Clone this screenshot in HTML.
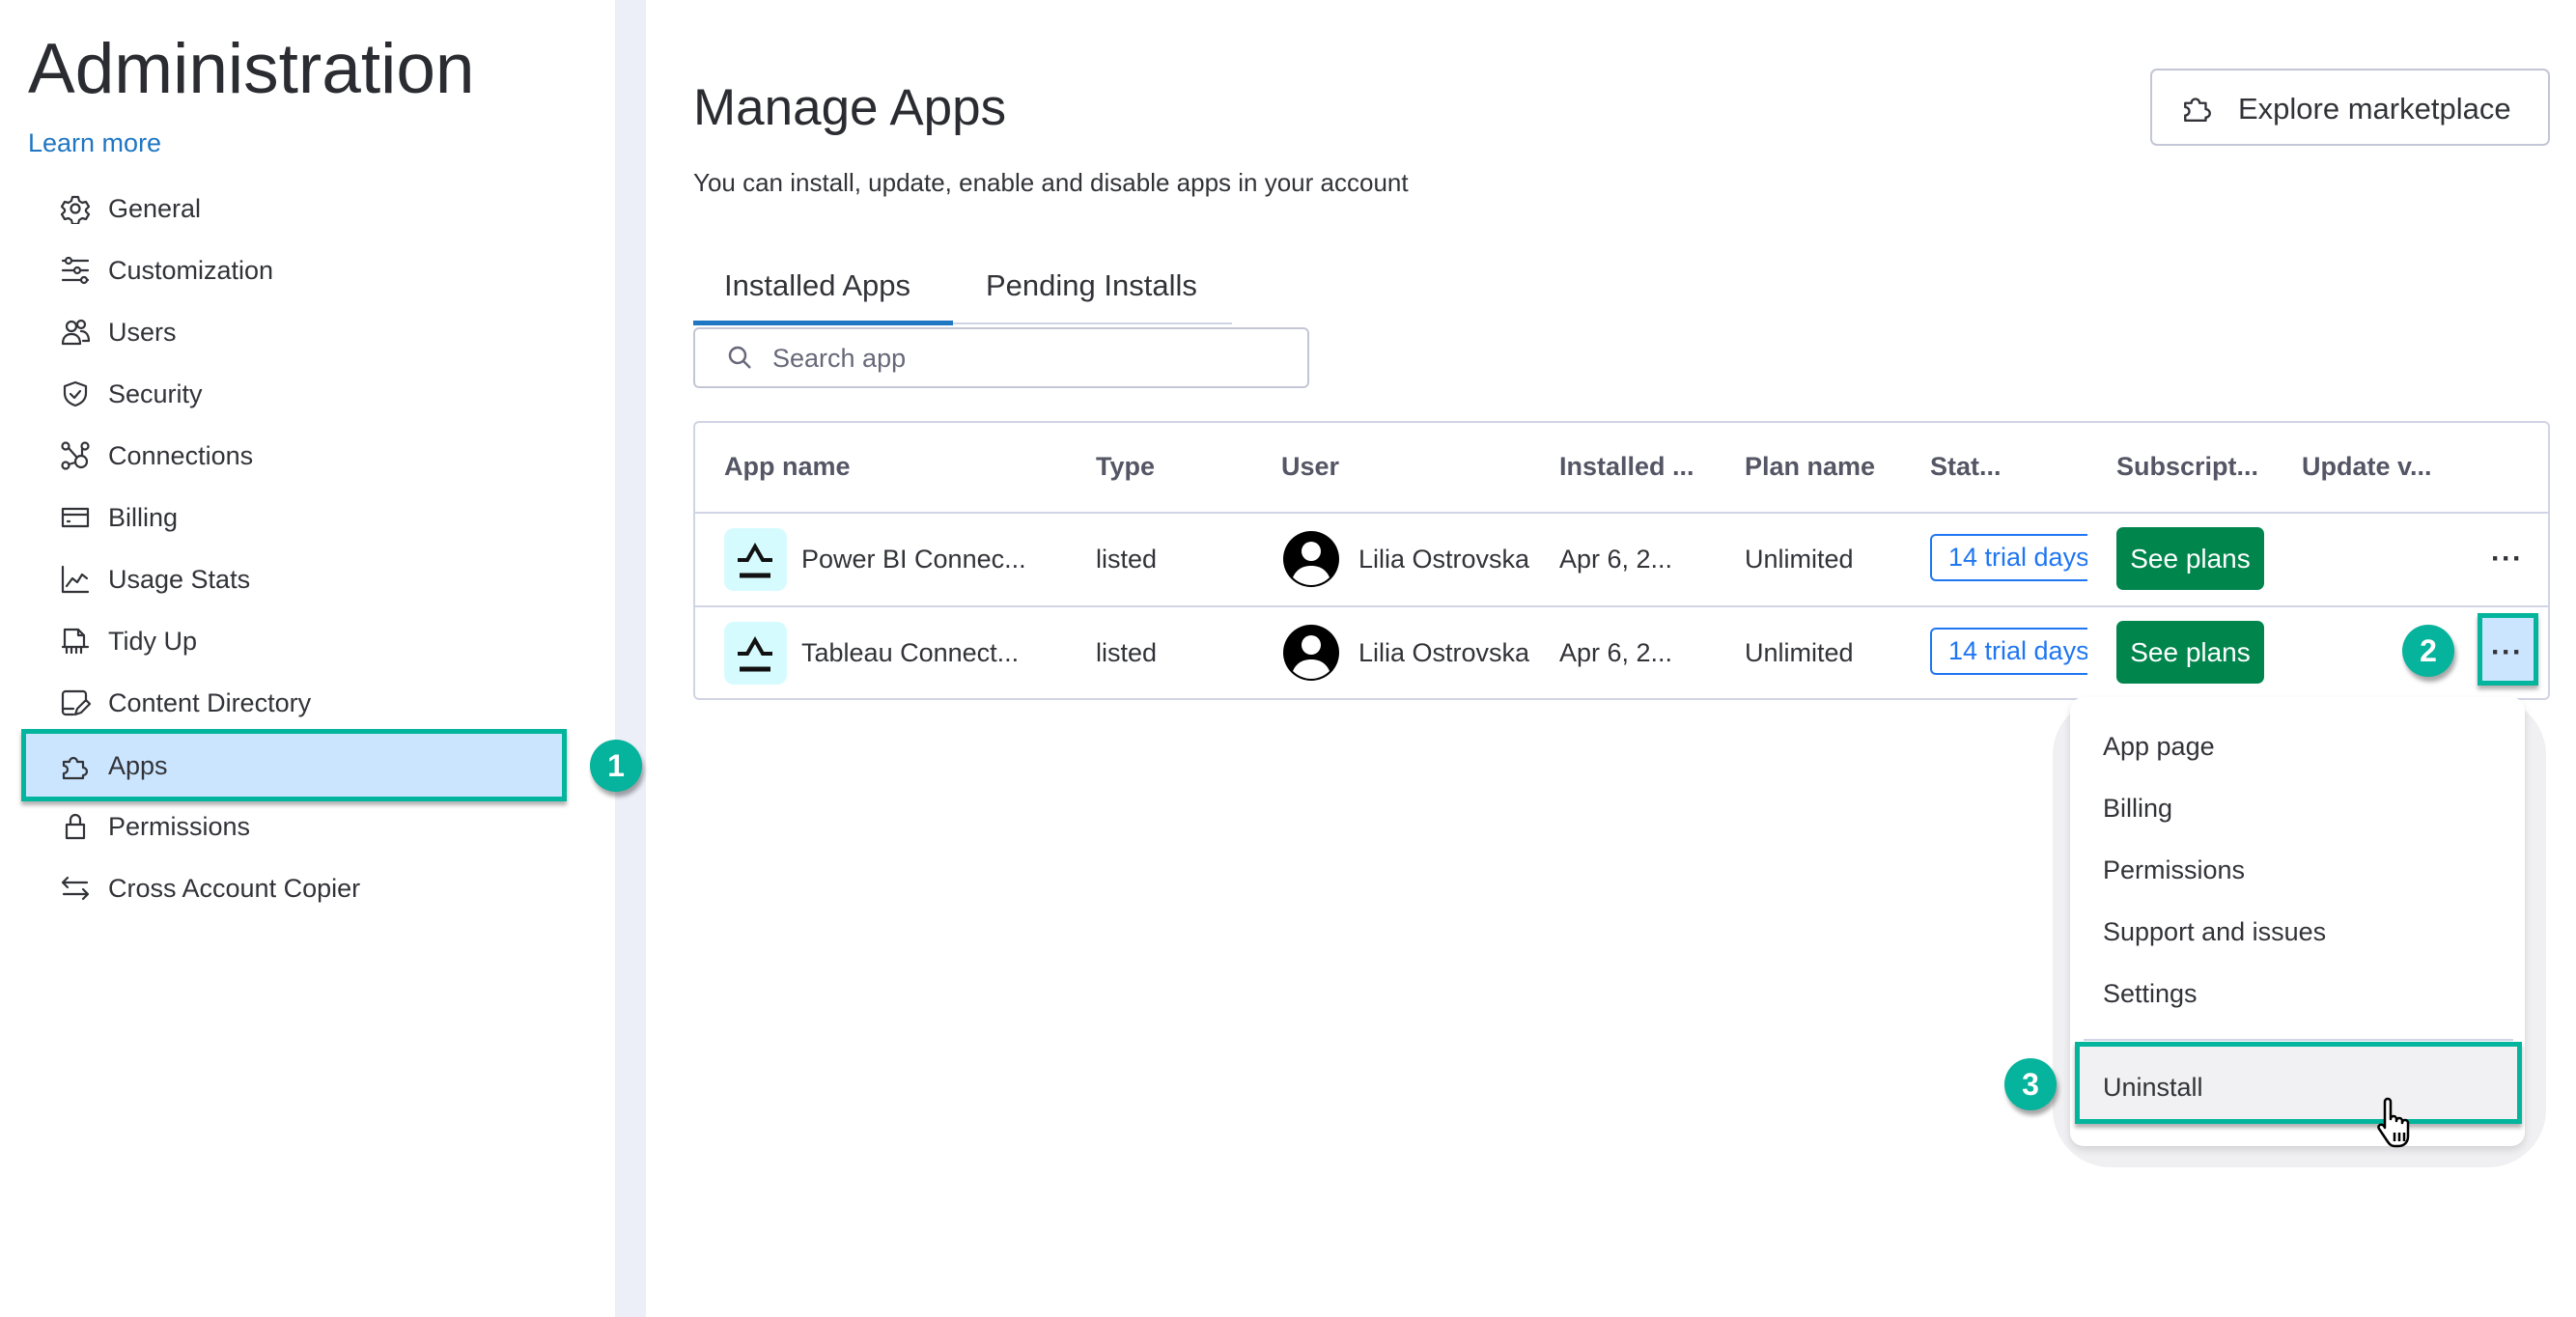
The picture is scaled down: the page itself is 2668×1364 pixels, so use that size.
<!DOCTYPE html>
<html><head><meta charset="utf-8"><style>
*{margin:0;padding:0;box-sizing:border-box}
body{width:2668px;height:1364px;background:#fff;font-family:"Liberation Sans",sans-serif;color:#323338;position:relative;overflow:hidden}
.a{position:absolute;white-space:nowrap}
.strip{left:637px;top:0;width:32px;height:1364px;background:#eceef8}
.nav{left:112px;font-size:27px;line-height:32px;transform:translateY(-16px)}
.ic{position:absolute;left:62px;width:32px;height:32px;transform:translateY(-16px)}
.ic svg{width:32px;height:32px;fill:none;stroke:#323338;stroke-width:2.2;stroke-linecap:round;stroke-linejoin:round}
.badge{width:54px;height:54px;border-radius:50%;background:#06b39c;color:#fff;font-size:32px;font-weight:bold;text-align:center;line-height:54px;box-shadow:2px 5px 5px rgba(0,0,0,.35)}
.th{font-size:27px;color:#676879;top:468px;font-weight:bold;color:#555665}
.td{font-size:27px}
.hline{position:absolute;height:2px;background:#d0d4e4}
.trial{border:2.5px solid #1f76f2;border-right:none;color:#1f76f2;font-size:27px;width:163px;height:49px;line-height:44px;padding-left:17px;overflow:hidden;border-radius:6px 0 0 6px}
.plans{background:#00854d;color:#fff;font-size:28px;width:153px;height:65px;line-height:65px;text-align:center;border-radius:7px}
.mi{left:2178px;font-size:27px;line-height:32px;transform:translateY(-16px)}
</style></head><body>
<div class="a strip"></div>
<div class="a" style="left:29px;top:28px;font-size:73px;line-height:88px;color:#2b2c31">Administration</div>
<div class="a" style="left:29px;top:132px;font-size:27px;line-height:32px;color:#1f76c2">Learn more</div>

<div class="a" style="left:22px;top:755px;width:565px;height:75px;background:#cce5ff;border:5px solid #03b59c;box-shadow:0 4px 4px rgba(0,0,0,.3)"></div>
<div class="a badge" style="left:611px;top:766px">1</div>

<div class="ic" style="top:216px"><svg viewBox="0 0 32 32"><circle cx="16" cy="16" r="4.5"/><path d="M13 4h6l1 4 3 2 4-1 3 5-3 3v2l3 3-3 5-4-1-3 2-1 4h-6l-1-4-3-2-4 1-3-5 3-3v-2l-3-3 3-5 4 1 3-2z"/></svg></div>
<div class="a nav" style="top:216px">General</div>
<div class="ic" style="top:280px"><svg viewBox="0 0 32 32"><path d="M3 6h26M3 16h26M3 26h26"/><circle cx="9" cy="6" r="3" fill="#fff"/><circle cx="18" cy="16" r="3" fill="#fff"/><circle cx="25" cy="26" r="3" fill="#fff"/></svg></div>
<div class="a nav" style="top:280px">Customization</div>
<div class="ic" style="top:344px"><svg viewBox="0 0 32 32"><circle cx="12" cy="10" r="5"/><circle cx="22" cy="8" r="4"/><path d="M3 28c0-7 4-10 9-10s9 3 9 10zM22 15c5 0 8 4 8 10h-6"/></svg></div>
<div class="a nav" style="top:344px">Users</div>
<div class="ic" style="top:408px"><svg viewBox="0 0 32 32"><path d="M16 4l11 4v7c0 7-5 11-11 13C10 26 5 22 5 15V8z"/><path d="M11 16l4 4 6-7"/></svg></div>
<div class="a nav" style="top:408px">Security</div>
<div class="ic" style="top:472px"><svg viewBox="0 0 32 32"><circle cx="6" cy="6" r="3.5"/><circle cx="26" cy="6" r="3.5"/><circle cx="6" cy="26" r="3.5"/><circle cx="22" cy="22" r="6"/><path d="M9 8l8 9M23 9v7M9 25l7-2"/></svg></div>
<div class="a nav" style="top:472px">Connections</div>
<div class="ic" style="top:536px"><svg viewBox="0 0 32 32"><rect x="3" y="7" width="26" height="18"/><path d="M3 13h26M8 20h2"/></svg></div>
<div class="a nav" style="top:536px">Billing</div>
<div class="ic" style="top:600px"><svg viewBox="0 0 32 32"><path d="M3 3v26h26M7 23l6-8 5 4 5-8 5 4"/></svg></div>
<div class="a nav" style="top:600px">Usage Stats</div>
<div class="ic" style="top:664px"><svg viewBox="0 0 32 32"><path d="M5 22V4h14l6 6v12M19 4v6h6M3 22h26M7 22v6M12 22v6M17 22v6M22 22v6"/></svg></div>
<div class="a nav" style="top:664px">Tidy Up</div>
<div class="ic" style="top:728px"><svg viewBox="0 0 32 32"><path d="M14 28H6a3 3 0 01-3-3V7a3 3 0 013-3h18a3 3 0 013 3v7M3 22h11M16 28l2-6 9-9 4 4-9 9z"/></svg></div>
<div class="a nav" style="top:728px">Content Directory</div>
<div class="ic" style="top:793px"><svg viewBox="0 0 32 32"><path d="M4 12h6a4 4 0 118 0h6v6a4 4 0 110 8v3H4v-5a4 4 0 100-8z"/></svg></div>
<div class="a nav" style="top:793px">Apps</div>
<div class="ic" style="top:856px"><svg viewBox="0 0 32 32"><rect x="7" y="14" width="18" height="14"/><path d="M11 14V9a5 5 0 0110 0v5"/></svg></div>
<div class="a nav" style="top:856px">Permissions</div>
<div class="ic" style="top:920px"><svg viewBox="0 0 32 32"><path d="M4 10h24M8 5L3 10l5 5M28 22H4M24 17l5 5-5 5"/></svg></div>
<div class="a nav" style="top:920px">Cross Account Copier</div>

<div class="a" style="left:718px;top:80px;font-size:53px;line-height:64px;color:#2b2c31">Manage Apps</div>
<div class="a" style="left:718px;top:173px;font-size:26px;line-height:32px">You can install, update, enable and disable apps in your account</div>

<div class="a" style="left:2227px;top:71px;width:414px;height:80px;border:2px solid #c3c6d4;border-radius:7px"></div>
<svg class="a" style="left:2259px;top:94px" width="34" height="34" viewBox="0 0 32 32" fill="none" stroke="#323338" stroke-width="2.2" stroke-linejoin="round"><path d="M4 12h6a4 4 0 118 0h6v6a4 4 0 110 8v3H4v-5a4 4 0 100-8z"/></svg>
<div class="a" style="left:2318px;top:95px;font-size:31px;line-height:36px">Explore marketplace</div>

<div class="a" style="left:750px;top:278px;font-size:31px;line-height:36px">Installed Apps</div>
<div class="a" style="left:1021px;top:278px;font-size:31px;line-height:36px">Pending Installs</div>
<div class="a" style="left:718px;top:334px;width:558px;height:2px;background:#d0d4e4"></div>
<div class="a" style="left:718px;top:332px;width:269px;height:5px;background:#1f76c2"></div>

<div class="a" style="left:718px;top:339px;width:638px;height:63px;border:2px solid #c3c6d4;border-radius:6px"></div>
<svg class="a" style="left:752px;top:356px" width="30" height="30" viewBox="0 0 30 30" fill="none" stroke="#676879" stroke-width="2.5"><circle cx="12" cy="12" r="8"/><path d="M18 18l7 7"/></svg>
<div class="a" style="left:800px;top:355px;font-size:27px;line-height:32px;color:#676879">Search app</div>

<div class="a" style="left:718px;top:436px;width:1923px;height:289px;border:2px solid #d0d4e4;border-radius:6px"></div>
<div class="hline" style="left:718px;top:530px;width:1923px"></div>
<div class="hline" style="left:718px;top:627px;width:1923px"></div>

<div class="a th" style="left:750px">App name</div>
<div class="a th" style="left:1135px">Type</div>
<div class="a th" style="left:1327px">User</div>
<div class="a th" style="left:1615px">Installed ...</div>
<div class="a th" style="left:1807px">Plan name</div>
<div class="a th" style="left:1999px">Stat...</div>
<div class="a th" style="left:2192px">Subscript...</div>
<div class="a th" style="left:2384px">Update v...</div>

<!-- row1 -->
<div class="a" style="left:750px;top:547px;width:65px;height:65px;background:#d6fbff;border-radius:10px"></div>
<svg class="a" style="left:760px;top:560px" width="44" height="40" viewBox="0 0 44 40" fill="none" stroke="#111" stroke-width="4"><path d="M4 20h10l8-14 8 14h10"/><path d="M6 36h32" stroke-width="5"/></svg>
<div class="a td" style="left:830px;top:564px">Power BI Connec...</div>
<div class="a td" style="left:1135px;top:564px">listed</div>
<svg class="a" style="left:1327px;top:548px" width="62" height="62" viewBox="0 0 62 62"><circle cx="31" cy="31" r="29" fill="#000"/><circle cx="31" cy="23" r="10" fill="#fff"/><path d="M12 50c4-9 11-12 19-12s15 3 19 12c-5 5-12 8-19 8s-14-3-19-8z" fill="#fff"/></svg>
<div class="a td" style="left:1407px;top:564px;width:177px;overflow:hidden">Lilia Ostrovska</div>
<div class="a td" style="left:1615px;top:564px">Apr 6, 2...</div>
<div class="a td" style="left:1807px;top:564px">Unlimited</div>
<div class="a trial" style="left:1999px;top:553px">14 trial days</div>
<div class="a plans" style="left:2192px;top:546px">See plans</div>
<div class="a" style="left:2580px;top:562px;font-size:30px;font-weight:bold;letter-spacing:1px">···</div>

<!-- row2 -->
<div class="a" style="left:750px;top:644px;width:65px;height:65px;background:#d6fbff;border-radius:10px"></div>
<svg class="a" style="left:760px;top:657px" width="44" height="40" viewBox="0 0 44 40" fill="none" stroke="#111" stroke-width="4"><path d="M4 20h10l8-14 8 14h10"/><path d="M6 36h32" stroke-width="5"/></svg>
<div class="a td" style="left:830px;top:661px">Tableau Connect...</div>
<div class="a td" style="left:1135px;top:661px">listed</div>
<svg class="a" style="left:1327px;top:645px" width="62" height="62" viewBox="0 0 62 62"><circle cx="31" cy="31" r="29" fill="#000"/><circle cx="31" cy="23" r="10" fill="#fff"/><path d="M12 50c4-9 11-12 19-12s15 3 19 12c-5 5-12 8-19 8s-14-3-19-8z" fill="#fff"/></svg>
<div class="a td" style="left:1407px;top:661px;width:177px;overflow:hidden">Lilia Ostrovska</div>
<div class="a td" style="left:1615px;top:661px">Apr 6, 2...</div>
<div class="a td" style="left:1807px;top:661px">Unlimited</div>
<div class="a trial" style="left:1999px;top:650px">14 trial days</div>
<div class="a plans" style="left:2192px;top:643px">See plans</div>
<div class="a badge" style="left:2488px;top:647px">2</div>
<div class="a" style="left:2566px;top:635px;width:63px;height:75px;border:5px solid #03b59c;background:#cce5ff;box-shadow:0 4px 4px rgba(0,0,0,.3)"></div>
<div class="a" style="left:2580px;top:659px;font-size:30px;font-weight:bold;letter-spacing:1px">···</div>

<!-- menu -->
<div class="a" style="left:2126px;top:722px;width:511px;height:487px;background:#f0f0f2;border-radius:60px"></div>
<div class="a" style="left:2144px;top:722px;width:471px;height:465px;background:#fff;border-radius:14px;box-shadow:0 4px 8px rgba(0,0,0,.12)"></div>
<div class="a mi" style="top:773px">App page</div>
<div class="a mi" style="top:837px">Billing</div>
<div class="a mi" style="top:901px">Permissions</div>
<div class="a mi" style="top:965px">Support and issues</div>
<div class="a mi" style="top:1029px">Settings</div>
<div class="a" style="left:2158px;top:1076px;width:445px;height:2px;background:#d0d4e4"></div>
<div class="a" style="left:2149px;top:1079px;width:463px;height:85px;border:5px solid #03b59c;background:#f1f1f3;box-shadow:0 4px 4px rgba(0,0,0,.3)"></div>
<div class="a mi" style="top:1126px">Uninstall</div>
<div class="a badge" style="left:2076px;top:1096px">3</div>
<svg class="a" style="left:2462px;top:1135px" width="46" height="56" viewBox="0 0 46 56" stroke="#000" stroke-width="2.5" fill="#fff" stroke-linejoin="round"><path d="M8 6c0-4 6-4 6 0v18c0-4 6-4 6 0v2c0-4 6-4 6 0v2c0-4 6-4 6 0v14c0 6-4 10-10 10H18c-4 0-6-3-8-6L2 34c-2-3 2-6 5-3l1 2z"/><path d="M18 38v9M23 38v9M28 38v9"/></svg>
</body></html>
